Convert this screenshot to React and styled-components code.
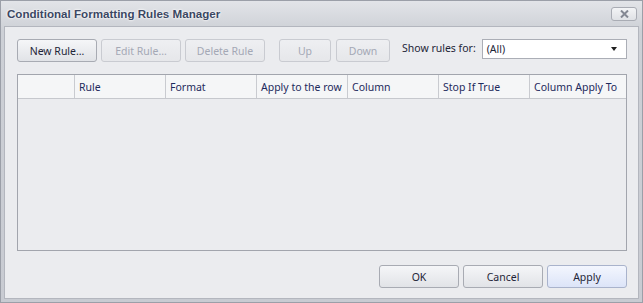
import React from 'react'
import styled, { createGlobalStyle } from 'styled-components'

const GlobalStyle = createGlobalStyle`
  html, body {
    margin: 0;
    padding: 0;
    background: #ffffff;
  }
`

const Window = styled.div`
  width: 643px;
  height: 303px;
  box-sizing: border-box;
  border: 1px solid #9b9fa8;
  background: linear-gradient(#e2e4e8, #cdd0d6 30px, #c8cbd2);
  display: flex;
  flex-direction: column;
  font-family: "Noto Sans", "Liberation Sans", sans-serif;
  font-size: 10.5px;
`

const TitleBar = styled.div`
  height: 25px;
  display: flex;
  align-items: center;
  justify-content: space-between;
  padding: 0 5px 0 6px;
  flex-shrink: 0;
`

const Title = styled.div`
  font-family: "Liberation Sans", Arial, sans-serif;
  font-weight: bold;
  font-size: 11.6px;
  color: #3b4762;
  text-shadow: 0 0 3px #ffffff, 0 0 2px #ffffff;
`

const CloseButton = styled.div`
  width: 24px;
  height: 12px;
  border: 1px solid #a9acb4;
  border-radius: 3px;
  background: linear-gradient(#f3f4f6, #dfe1e5);
  display: flex;
  align-items: center;
  justify-content: center;
  margin-top: 1px;
`

const Body = styled.div`
  flex: 1;
  margin: 0 3px 3px 3px;
  border: 1px solid #b3b6be;
  background: #ebecef;
  display: flex;
  flex-direction: column;
  padding: 12px 11px 10px 12px;
  min-height: 0;
`

const Toolbar = styled.div`
  display: flex;
  align-items: flex-start;
`

const Button = styled.div`
  box-sizing: border-box;
  width: ${p => p.$w || 80}px;
  height: 23px;
  margin-left: ${p => p.$ml || 0}px;
  border: 1px solid ${p => (p.$disabled ? '#c9cbd1' : p.$primary ? '#a9b3cc' : '#a8abb3')};
  border-radius: 3px;
  background: ${p =>
    p.$primary
      ? 'linear-gradient(#f3f6fe, #dce4f8)'
      : p.$disabled
      ? 'linear-gradient(#eeeff2, #e6e7ea)'
      : 'linear-gradient(#f5f6f8, #e1e3e7)'};
  color: ${p => (p.$disabled ? '#a4a8b5' : '#1e2538')};
  display: flex;
  align-items: center;
  justify-content: center;
  white-space: nowrap;
  flex-shrink: 0;
`

const Label = styled.div`
  margin-left: 12px;
  height: 20px;
  line-height: 19px;
  color: #1e2538;
  white-space: nowrap;
`

const Combo = styled.div`
  flex: 1;
  margin-left: 6px;
  box-sizing: border-box;
  height: 20px;
  border: 1px solid #abaeb6;
  background: #ffffff;
  display: flex;
  align-items: center;
  justify-content: space-between;
  padding: 0 9px 0 4px;
  color: #1e2538;
`

const Arrow = styled.div`
  width: 0;
  height: 0;
  border-left: 3px solid transparent;
  border-right: 3px solid transparent;
  border-top: 4px solid #202020;
`

const Grid = styled.div`
  flex: 1;
  margin-top: 12px;
  border: 1px solid #a2a5ad;
  background: #ebecef;
`

const HeaderRow = styled.div`
  display: grid;
  grid-template-columns: 57px repeat(5, 91px) 1fr;
  height: 24px;
  box-sizing: border-box;
  border-bottom: 1px solid #c6c8cd;
  background: #f5f6f7;
`

const HeaderCell = styled.div`
  border-right: ${p => (p.$last ? 'none' : '1px solid #c9cbd0')};
  padding-left: 4px;
  display: flex;
  align-items: center;
  color: #1d2a5c;
  white-space: nowrap;
  overflow: hidden;
`

const Footer = styled.div`
  display: flex;
  justify-content: flex-end;
  margin-top: 14px;
`

const columns = ['', 'Rule', 'Format', 'Apply to the row', 'Column', 'Stop If True', 'Column Apply To']

export default function App() {
  return (
    <>
      <GlobalStyle />
      <Window>
        <TitleBar>
          <Title>Conditional Formatting Rules Manager</Title>
          <CloseButton>
            <svg width="9" height="8" viewBox="0 0 9 8">
              <path d="M1 0.5 L8 7.5 M8 0.5 L1 7.5" stroke="#848893" strokeWidth="2" />
            </svg>
          </CloseButton>
        </TitleBar>
        <Body>
          <Toolbar>
            <Button>New Rule…</Button>
            <Button $disabled $ml={4}>Edit Rule…</Button>
            <Button $disabled $ml={4}>Delete Rule</Button>
            <Button $disabled $ml={14} $w={52}>Up</Button>
            <Button $disabled $ml={5} $w={54}>Down</Button>
            <Label>Show rules for:</Label>
            <Combo>
              <span>(All)</span>
              <Arrow />
            </Combo>
          </Toolbar>
          <Grid>
            <HeaderRow>
              {columns.map((c, i) => (
                <HeaderCell key={i} $last={i === columns.length - 1}>{c}</HeaderCell>
              ))}
            </HeaderRow>
          </Grid>
          <Footer>
            <Button>OK</Button>
            <Button $ml={4}>Cancel</Button>
            <Button $ml={4} $primary>Apply</Button>
          </Footer>
        </Body>
      </Window>
    </>
  )
}
